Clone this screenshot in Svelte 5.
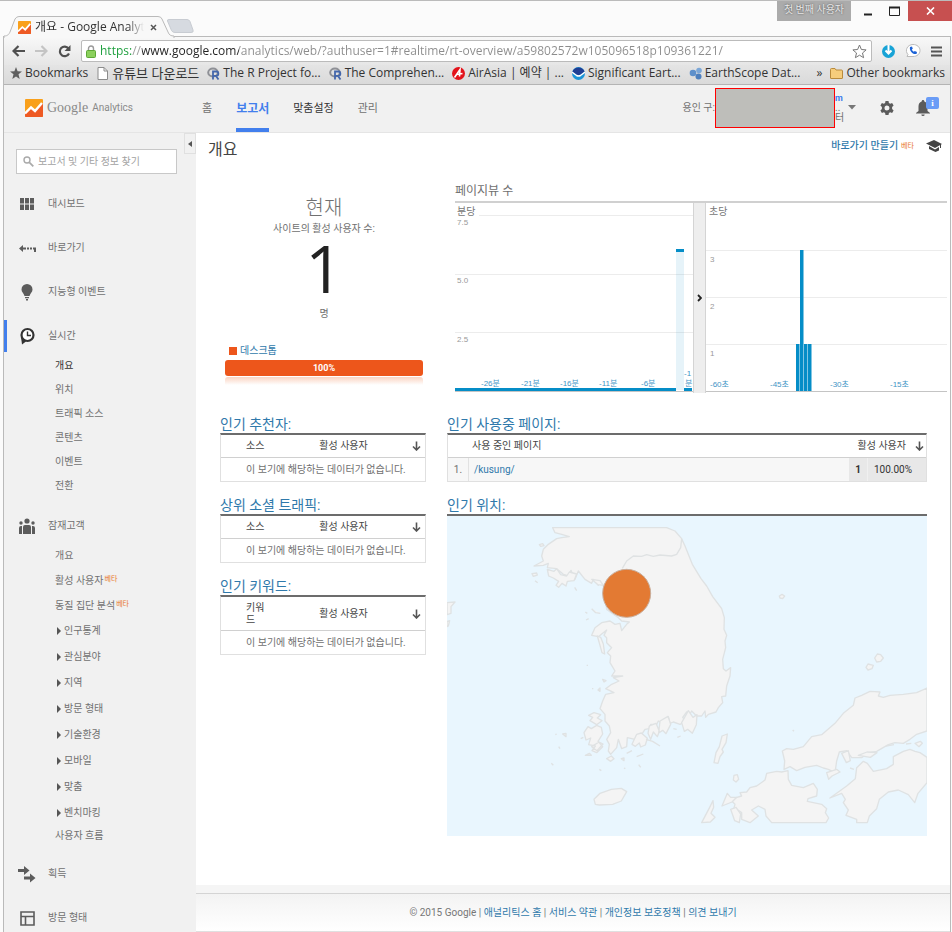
<script>
  const url = 'https://www.google.com/analytics/web/?authuser=1#realtime/rt-overview/a59802572w105096518p109361221/';

  const bookmarks = [
    { icon: 'page', label: '유튜브 다운로드', wide: true },
    { icon: 'r', label: 'The R Project fo...' },
    { icon: 'r', label: 'The Comprehen...' },
    { icon: 'air', label: 'AirAsia | 예약 | ...' },
    { icon: 'noaa', label: 'Significant Eart...' },
    { icon: 'earth', label: 'EarthScope Dat...' }
  ];

  const menu = [
    { icon: 'grid', label: '대시보드' },
    { icon: 'short', label: '바로가기' },
    { icon: 'bulb', label: '지능형 이벤트' },
    {
      icon: 'clock', label: '실시간', active: true,
      items: [
        { label: '개요', current: true }, { label: '위치' }, { label: '트래픽 소스' },
        { label: '콘텐츠' }, { label: '이벤트' }, { label: '전환' }
      ]
    },
    {
      icon: 'people', label: '잠재고객',
      items: [
        { label: '개요' }, { label: '활성 사용자', beta: true }, { label: '동질 집단 분석', beta: true },
        { label: '인구통계', fold: true }, { label: '관심분야', fold: true }, { label: '지역', fold: true },
        { label: '방문 형태', fold: true }, { label: '기술환경', fold: true }, { label: '모바일', fold: true },
        { label: '맞춤', fold: true }, { label: '벤치마킹', fold: true }, { label: '사용자 흐름', tight: true }
      ]
    },
    { icon: 'arrows', label: '획득' },
    { icon: 'layout', label: '방문 형태' }
  ];

  const reports = [
    { title: '인기 추천자:', column: '소스' },
    { title: '상위 소셜 트래픽:', column: '소스' },
    { title: '인기 키워드:', column: '키워드', tall: true }
  ];

  const minuteTicks = [[26, '-26분'], [66, '-21분'], [105, '-16분'], [144, '-11분'], [186, '-6분']];
  const secondTicks = [[4, '-60초'], [64, '-45초'], [124, '-30초'], [184, '-15초']];
  const seconds = [[90, 1], [94, 3], [98, 1], [102, 1]];
  const footerLinks = ['애널리틱스 홈', '서비스 약관', '개인정보 보호정책', '의견 보내기'];
</script>

{#snippet down()}
  <svg class="down" width="9" height="10" viewBox="0 0 9 10" aria-hidden="true"><path d="M4.5 0.5V9M1 5.5l3.5 3.5L8 5.5" fill="none" stroke="#555" stroke-width="1.6" /></svg>
{/snippet}

{#snippet gaLogo(size)}
  <svg width={size} height={size} viewBox="0 0 18 18" aria-hidden="true">
    <rect width="18" height="18" rx="1" fill="#f9a01b" />
    <path d="M0 14.5 6 8.500l4 3.500 8-8V17a1 1 0 0 1-1 1H1a1 1 0 0 1-1-1z" fill="#ee5a24" />
    <path d="M0 14.500 6 8.500l4 3.500 7-8" fill="none" stroke="#fff" stroke-width="2.400" />
  </svg>
{/snippet}

<div class="window">
  <header class="titlebar">
    <div class="tab">
      <svg class="tabshape" width="194" height="22" viewBox="0 0 194 22" aria-hidden="true">
        <path d="M0 22V20C4 20 5 18 6 16L11 3Q12.500.5 15 .5H154Q157 .5 158 3L164 16C165 19 167 20 170 20V22" fill="#f8f8f8" stroke="#bababa" />
        <path d="M163.500 5Q163 3.500 165 3.500H183Q185 3.500 186 5.500L189 14Q190 16.500 187 16.500H171Q168.500 16.500 167.500 14.500Z" fill="#d6dae0" stroke="#c8ccd2" />
      </svg>
      <span class="fav">{@render gaLogo(13)}</span>
      <span class="tabtitle">개요 - Google Analyt</span>
      <button class="tabclose" aria-label="Close tab">
        <svg width="7" height="7" viewBox="0 0 7 7"><path d="M1 1l5 5M6 1L1 6" stroke="#555" stroke-width="1.500" /></svg>
      </button>
    </div>
    <div class="controls">
      <span class="profile">첫 번째 사용자</span>
      <button aria-label="Minimize"><svg width="10" height="10" viewBox="0 0 10 10"><path d="M1 8.500h8" stroke="#222" stroke-width="2" /></svg></button>
      <button aria-label="Maximize"><svg width="11" height="10" viewBox="0 0 11 10"><path d="M.5 1v8.500h10V1" fill="none" stroke="#222" /><path d="M0 1.500h11" stroke="#222" stroke-width="2" /></svg></button>
      <button class="close" aria-label="Close"><svg width="9" height="8" viewBox="0 0 9 8"><path d="M1 .5l7 7M8 .5l-7 7" stroke="#fff" stroke-width="1.600" /></svg></button>
    </div>
  </header>

  <div class="frame">
    <div class="toolbar">
      <button aria-label="Back"><svg width="13" height="12" viewBox="0 0 13 12"><path d="M6.500 1L1.500 6l5 5M2 6h11" fill="none" stroke="#505050" stroke-width="2.200" /></svg></button>
      <button aria-label="Forward"><svg width="13" height="12" viewBox="0 0 13 12"><path d="M6.500 1l5 5-5 5M11 6H0" fill="none" stroke="#c4c4c4" stroke-width="2.200" /></svg></button>
      <button aria-label="Reload"><svg width="13" height="13" viewBox="0 0 13 13"><path d="M10.500 3.500A4.800 4.800 0 1 0 11 8.500" fill="none" stroke="#505050" stroke-width="2.200" /><path d="M12.500 0v6h-6z" fill="#505050" /></svg></button>
      <div class="omni">
        <svg width="10" height="13" viewBox="0 0 10 13" aria-hidden="true"><path d="M2.500 6V3.500a2.500 2.500 0 0 1 5 0V6" fill="none" stroke="#9a9a9a" stroke-width="1.400" /><rect x=".5" y="5.500" width="9" height="7" rx="1" fill="#8bd05c" stroke="#5da736" /></svg>
        <input aria-label="Address" value={url} />
        <button aria-label="Bookmark this page"><svg width="15" height="15" viewBox="0 0 15 15"><path d="M7.500 1l1.900 4.500 4.700.4-3.600 3.100 1.100 4.700-4.100-2.500-4.100 2.500L4.500 9 .9 5.900l4.700-.4z" fill="#fff" stroke="#777" /></svg></button>
      </div>
      <button aria-label="Downloader"><svg width="13" height="13" viewBox="0 0 13 13"><circle cx="6.500" cy="6.500" r="6.500" fill="#18a3d6" /><path d="M6.500 0v8M3.500 5.500l3 3 3-3" fill="none" stroke="#fff" stroke-width="2" /></svg></button>
      <button aria-label="Calls"><svg width="16" height="14" viewBox="0 0 16 14"><path d="M8 .5c4 0 7 2.500 7 6s-3 6-7 6H2l1-2C-.5 7 2 .5 8 .5z" fill="#fff" stroke="#bbb" /><path d="M5 3l2-.5.8 2.300-1 .8c.4 1 1.200 1.800 2 2.200l1-.9 2.200 1-.5 2C8 11 4 7 5 3z" fill="#1c62d6" /></svg></button>
      <button aria-label="Menu"><svg width="11" height="11" viewBox="0 0 11 11"><path d="M0 1.500h11M0 5.500h11M0 9.500h11" stroke="#555" stroke-width="2" /></svg></button>
    </div>

    <nav class="bookmarks" aria-label="Bookmarks">
      <a href="#bookmarks"><svg width="12" height="12" viewBox="0 0 12 12"><path d="M6 0l1.600 4.200 4.400.2-3.500 2.800L9.700 12 6 9.400 2.300 12l1.200-4.800L0 4.400l4.400-.2z" fill="#606060" /></svg><span>Bookmarks</span></a>
      {#each bookmarks as b}
        <a href="#b" class:wide={b.wide}>
          <svg width="13" height="13" viewBox="0 0 13 13">
            {#if b.icon === 'page'}
              <path d="M2 .5h6l3.500 3.500v8.500H2z" fill="#fff" stroke="#8c8c8c" /><path d="M8 .5V4h3.500" fill="none" stroke="#8c8c8c" />
            {:else if b.icon === 'r'}
              <ellipse cx="6" cy="5.500" rx="4.800" ry="4" fill="none" stroke="#8e9096" stroke-width="2" /><path d="M6 12.500V4.500h3.200a2 2 0 0 1 0 4.300H6M9 9l2.500 3.500" fill="none" stroke="#4467ac" stroke-width="1.800" />
            {:else if b.icon === 'air'}
              <circle cx="6.500" cy="6.500" r="6.500" fill="#e3131b" /><path d="M2.500 10.500L8 2.500l-.5 7M4.500 7.500l6-1" fill="none" stroke="#fff" stroke-width="1.600" />
            {:else if b.icon === 'noaa'}
              <circle cx="6.500" cy="6.500" r="6.500" fill="#1b95d8" /><path d="M.3 5A6.500 6.500 0 0 1 12.700 5L8 8H5z" fill="#1f3f94" /><path d="M0 5l4.500 3.500Q6.500 9.500 8.500 8.500L13 5" fill="none" stroke="#fff" stroke-width="1.400" />
            {:else}
              <circle cx="4" cy="6" r="3.300" fill="#5e90cb" /><circle cx="10" cy="3.500" r="2.800" fill="#7ba7d8" /><circle cx="9.500" cy="9.500" r="3" fill="#4d7fbd" />
            {/if}
          </svg><span>{b.label}</span>
        </a>
      {/each}
      <button class="more" aria-label="More bookmarks">»</button>
      <a class="other" href="#other"><svg width="13" height="11" viewBox="0 0 13 11"><path d="M.5 10V1.500q0-1 1-1H5l1 1.500h5.500q1 0 1 1V10q0 .5-.5.5H1q-.5 0-.5-.5z" fill="#f6cd7c" stroke="#b98b3c" /></svg><span>Other bookmarks</span></a>
    </nav>

    <header class="appbar">
      <a class="brand" href="#home">{@render gaLogo(18)}<span class="google">Google</span><span class="analytics">Analytics</span></a>
      <nav class="tabs" aria-label="Main">
        <a href="#home">홈</a>
        <a href="#reports" class="on">보고서</a>
        <a href="#custom" class="dark">맞춤설정</a>
        <a href="#admin">관리</a>
      </nav>
      <div class="account">
        <span>용인 구:</span>
        <div class="mask"></div>
        <div class="tail"><b>m</b><span>..</span><span>터</span></div>
        <button aria-label="Account menu"><svg width="8" height="5" viewBox="0 0 8 5"><path d="M0 0h8L4 4.500z" fill="#777" /></svg></button>
      </div>
      <button class="gear" aria-label="Settings"><svg width="14" height="14" viewBox="0 0 14 14"><path d="M5.500 0h3l.4 2 1.300.7 1.900-.7 1.500 2.600L12.100 6v2l1.500 1.400L12.100 12l-1.900-.7-1.300.7-.4 2h-3l-.4-2-1.300-.7-1.900.7L.4 9.400 1.900 8V6L.4 4.600 1.900 2l1.900.7L5.100 2zM7 4.500a2.500 2.500 0 1 0 0 5 2.500 2.500 0 0 0 0-5z" fill="#5b5b5b" fill-rule="evenodd" /></svg></button>
      <button class="bell" aria-label="Notifications">
        <svg width="14" height="16" viewBox="0 0 14 16"><path d="M7 0a1.300 1.300 0 0 1 1.300 1.400C10.500 2 11.500 4 11.500 6.500V11l2.500 2v.5H0V13l2.500-2V6.500C2.500 4 3.500 2 5.700 1.400A1.300 1.300 0 0 1 7 0zM5.300 14.500h3.400a1.700 1.500 0 0 1-3.400 0z" fill="#5b5b5b" /></svg>
        <i>i</i>
      </button>
    </header>

    <div class="body">
      <aside class="side">
        <form class="search">
          <svg width="11" height="11" viewBox="0 0 11 11" aria-hidden="true"><circle cx="4" cy="4" r="3" fill="none" stroke="#aaa" stroke-width="1.400" /><path d="M6.300 6.300l4 4" stroke="#aaa" stroke-width="1.800" /></svg>
          <input aria-label="검색" placeholder="보고서 및 기타 정보 찾기" />
        </form>
        {#each menu as m}
          <a class="item" class:active={m.active} href="#menu">
            <svg width="18" height="18" viewBox="0 0 18 18" fill="#5c5c5c" aria-hidden="true">
              {#if m.icon === 'grid'}
                <path d="M2 3h4v5.500H2zM7 3h4v5.500H7zM12 3h4v5.500h-4zM2 9.500h4V15H2zM7 9.500h4V15H7zM12 9.500h4V15h-4z" />
              {:else if m.icon === 'short'}
                <path d="M1 9.500l4-3.500v2.500h3v2H5V13zM9 8.500h2v2H9zM12 8.500h2v2h-2zM15 8.500h3V13h-2v-2.500h-1z" />
              {:else if m.icon === 'bulb'}
                <path d="M9 1a5.500 5.500 0 0 1 5.500 5.500c0 2.500-2 3.500-3 6.500h-5c-1-3-3-4-3-6.500A5.500 5.500 0 0 1 9 1zM7 14h4v1.200H7zM8 16h2v1.500H8z" />
              {:else if m.icon === 'clock'}
                <circle cx="9.500" cy="8" r="6" fill="#fff" stroke="#333" stroke-width="2.200" /><path d="M3 10l1 7.500 4-3z" fill="#333" /><path d="M9.500 4.500V8.500h3.500" fill="none" stroke="#333" stroke-width="1.400" />
              {:else if m.icon === 'people'}
                <circle cx="9" cy="4" r="2.600" /><circle cx="3" cy="6" r="1.700" /><circle cx="15" cy="6" r="1.700" /><path d="M5 17V10q0-2 2-2h4q2 0 2 2v7zM1 17v-6q0-2 2-2h1v8zM14 9h1q2 0 2 2v6h-3z" />
              {:else if m.icon === 'arrows'}
                <path d="M0 4h6V1l5.500 4.500L6 10V7H0zM6 11.500h6v-3l5.500 4.500-5.500 4.500v-3H6z" />
              {:else}
                <path d="M3 3h13v13H3zM3 7.500h13M7.500 7.500V16" fill="none" stroke="#5c5c5c" stroke-width="1.600" />
              {/if}
            </svg>
            <span>{m.label}</span>
          </a>
          {#if m.items}
            <ul>
              {#each m.items as s}
                <li class:beta={s.beta} class:fold={s.fold} class:tight={s.tight}>
                  <a href="#sub" class:current={s.current}>{#if s.fold}<svg width="4" height="8" viewBox="0 0 4 8" aria-hidden="true"><path d="M0 0l4 4-4 4z" fill="#555" /></svg>{/if}{s.label}{#if s.beta}<sup>베타</sup>{/if}</a>
                </li>
              {/each}
            </ul>
          {/if}
        {/each}
        <button class="collapse" aria-label="Collapse sidebar"><svg width="4" height="6" viewBox="0 0 4 6"><path d="M4 0v6L0 3z" fill="#555" /></svg></button>
      </aside>

      <main>
        <div class="content">
          <div class="heading">
            <h1>개요</h1>
            <a href="#shortcut">바로가기 만들기</a><sup>베타</sup>
            <svg width="16" height="12" viewBox="0 0 16 12" aria-hidden="true"><path d="M0 3.500L8 0l8 4-7 4z" fill="#444" /><path d="M3 6l6 3.500L13 7v3.500L9.500 12 3 9z" fill="#444" /><path d="M14.500 4v4" stroke="#444" /></svg>
          </div>

          <div class="top">
            <section class="now">
              <h2>현재</h2>
              <p>사이트의 활성 사용자 수:</p>
              <strong>1</strong>
              <p>명</p>
              <div class="legend"><i></i>데스크톱</div>
              <div class="bar">100%</div>
              <div class="mirror"></div>
            </section>

            <section class="views">
              <h2>페이지뷰 수</h2>
              <div class="charts">
                <svg class="minutes" viewBox="0 0 238 190" role="img" aria-label="분당 페이지뷰">
                  <path d="M24 12.500H238M0 71.500H238M0 129.500H238" stroke="#ececec" />
                  <text x="2" y="12" class="name">분당</text>
                  <svg x="0" y="17" width="40" height="10"><text x="2" y="5">7.5</text></svg>
                  <text x="2" y="80">5.0</text>
                  <text x="2" y="139">2.5</text>
                  {#each minuteTicks as t}<text class="tick" x={t[0]} y="183">{t[1]}</text>{/each}
                  <text class="tick" x="229" y="173">-1</text>
                  <text class="tick" x="230" y="183">분</text>
                  <rect x="221" y="49" width="8" height="138" fill="#058dc7" opacity=".1" />
                  <path d="M221 47.500h8M0 186.500H221M229 186.500h8" stroke="#058dc7" stroke-width="3" />
                  <path d="M0 188.500H238" stroke="#c4c4c4" />
                </svg>
                <button class="split" aria-label="펼치기"><svg width="5" height="8" viewBox="0 0 5 8"><path d="M1 1l3 3-3 3" fill="none" stroke="#222" stroke-width="1.800" /></svg></button>
                <svg class="secs" viewBox="0 0 241 190" role="img" aria-label="초당 페이지뷰">
                  <path d="M0 47.500H241M0 94.500H241M0 141.500H241" stroke="#ececec" />
                  <text x="3" y="12" class="name">초당</text>
                  <text x="4" y="59">3</text>
                  <text x="4" y="106">2</text>
                  <text x="4" y="153">1</text>
                  {#each secondTicks as t}<text class="tick" x={t[0]} y="184">{t[1]}</text>{/each}
                  {#each seconds as s}<rect x={s[0]} y={188 - s[1] * 47} width="3.500" height={s[1] * 47} fill="#058dc7" />{/each}
                  <path d="M0 188.500H241" stroke="#c4c4c4" />
                </svg>
              </div>
            </section>
          </div>

          <div class="cards">
            <div>
              {#each reports as r}
                <section class="card">
                  <h3><a href="#report">{r.title}</a></h3>
                  <table class="list" class:tall={r.tall}>
                    <thead><tr><th class="src"><span>{r.column}</span></th><th>활성 사용자</th><th class="sort">{@render down()}</th></tr></thead>
                    <tbody><tr><td colspan="3" class="empty">이 보기에 해당하는 데이터가 없습니다.</td></tr></tbody>
                  </table>
                </section>
              {/each}
            </div>
            <div>
              <section class="card">
                <h3><a href="#pages">인기 사용중 페이지:</a></h3>
                <table class="pages">
                  <thead><tr><th class="num"></th><th class="left">사용 중인 페이지</th><th colspan="2" class="right"><div><span>활성 사용자</span>{@render down()}</div></th></tr></thead>
                  <tbody><tr><td class="num">1.</td><td class="path"><a href="#kusung">/kusung/</a></td><td class="count">1</td><td class="pct">100.00%</td></tr></tbody>
                </table>
              </section>
              <section class="card">
                <h3><a href="#geo">인기 위치:</a></h3>
                <svg class="map" viewBox="21 30 1440 960" role="img" aria-label="인기 위치 지도">
                  <rect x="21" y="30" width="1440" height="960" fill="#e9f6fe" />
                  <g fill="#f4f4f4" stroke="#dfe2e3" stroke-width="4" stroke-linejoin="round">
                    <path d="M338 65L680 65 705 75 725 98 735 120 757 175 783 218 800 240 818 272 845 308 853 335 852 370 860 388 855 405 857 425 848 460 850 488 858 495 872 485 870 510 860 540 857 570 845 572 848 590 835 605 828 618 805 625 797 634 795 615 785 630 770 630 755 615 748 627 740 618 728 634 738 645 720 655 700 648 690 652 685 632 675 645 665 650 655 645 650 655 632 655 628 668 615 670 605 685 590 690 585 700 562 695 560 722 545 728 535 700 530 725 512 745 505 735 508 715 500 700 512 680 508 660 495 645 495 625 480 608 488 585 497 565 522 560 497 548 515 535 537 525 520 515 548 510 515 510 525 495 510 470 512 450 502 440 515 425 500 410 500 395 492 388 500 372 475 392 455 388 465 365 485 350 510 345 525 355 540 352 545 374 560 355 568 348 545 345 535 335 500 310 490 240 480 225 475 238 460 220 455 232 435 220 415 195 405 220 393 193 385 210 370 205 350 188 322 185 325 172 310 178 282 180 310 165 305 150 310 130 325 115 350 98 365 95 388 92 365 85 345 80Z" />
                    <path d="M725 98L722 125 710 145 695 150 660 147 640 151 620 146 605 151 580 150 560 165 547 187" fill="none" />
                    <path d="M322 190l20 6 8-8 12 18 18 4 8-12 22 6-8 20-20 2-4 14-12-8-10 12-8-6 8-12-16-10-14-6zM455 220l25 4 10 14-16-2zM298 116l10-3 4 6-10 2zM276 203l14-2 2 6-12 4zM285 224l8 6M404 244l6 10" />
                    <path d="M472 390l10 4 8 20 4 30-8-4-6-22zM455 308l12 12 14 2M438 342l8-4M436 318l6 4M488 520l10 4-6 4zM474 552l6-6v10zM456 548l4 0M440 478l4 0" />
                    <path d="M446 628l16-8 20 6-10 10 14 8-16 12-20-12 8-10zM432 680l12-18 10 6 16-10 14 6 4 20-14 22 14 16-18 18-14-6 10-14-20-4 6-20-14 6zM455 722l22-14 12 6-18 20zM422 698l8-4M436 748l12-6 6 6zM500 758l14-8 8 8-10 8zM544 758l8-2v8zM478 790l6 4M596 776l6 8M552 786l4 2M334 772l6 6M368 684l10-2v10zM356 722l4 6M346 686l4-2" />
                    <path d="M576 715l14-30 14-4 18 16-6 20-14 6-4-12-12 10zM628 660l20-8 10 24-6 16-12-14-8 22-8-18zM660 645l24-14 8 24-14 28-10-10-12 8zM725 650l20-36 14 20 12-8-2 30-12 26-14-12-10 6zM618 700l20 6 22 14M700 668l10 2M712 694l10-4M560 742l16-8M590 752l20-8" />
                    <path d="M846 690l16-6-4 26-12 20 4 8-10 14-6 20-12-2 6-30 10-18zM882 808l10-2 4 14-8 8-8-6zM462 880l18-18 34-12 30-3 16 10-16 28-26 10-40 2-12-2zM785 950l24-46 10-20 2 20-8 18 12 12-14 14z" />
                    <path d="M21 290l24-2-12 14 0 20-12 4zM21 346l8-2-4 16-4 2z" />
                    <path d="M1018 270l8-5 8 5-6 8-8-2zM1304 456l8-12 10 2 8 10-8 10-12 2zM1278 484l6-10 16 4-4 10-12 4zM1058 672l4 4" />
                    <path d="M1461 546L1430 560 1390 565 1350 568 1330 574 1315 570 1320 558 1305 557 1290 556 1265 568 1245 576 1240 598 1210 622 1185 652 1145 686 1115 692 1090 722 1060 730 1040 728 1027 735 1034 765 1032 790 1050 782 1070 794 1095 784 1130 778 1150 786 1165 790 1185 800 1190 765 1198 738 1220 734 1235 755 1265 755 1285 740 1310 736 1345 716 1365 710 1390 712 1410 700 1430 685 1461 675Z" />
                    <path d="M1461 754L1440 740 1425 736 1410 730 1390 736 1360 752 1360 775 1340 788 1300 796 1282 772 1270 766 1250 785 1246 818 1220 840 1170 876 1205 862 1216 880 1210 890 1225 912 1218 928 1250 940 1250 950 1282 950 1288 930 1310 908 1318 880 1345 858 1375 852 1405 866 1424 890 1434 862 1461 830Z" />
                    <path d="M1044 794L1025 798 1010 796 980 802 975 822 950 840 930 845 920 858 900 860 905 870 870 880 885 895 882 905 905 920 905 940 930 950 955 930 935 912 955 900 975 910 978 930 995 950 1158 950 1166 936 1156 920 1160 908 1145 895 1102 886 1104 878 1130 870 1132 850 1120 832 1090 845 1055 838 1045 820Z" />
                    <path d="M1425 712l16-6 6 6-10 10zM1205 742l20-8 6 30-12 6zM1255 748l26-10 30 2-20 14zM1160 800l30-10 10 8-24 12-10 10zM1230 786l12 4M846 900l16-38 10 12 18 0-14 14zM872 910l16-6 14 20-4 26-14-6zM1338 720l24-4M1398 714l16-2" />
                  </g>
                  <circle cx="560" cy="262" r="72" fill="#e37a33" stroke="#c9ae9c" stroke-width="3" />
                </svg>
              </section>
            </div>
          </div>
        </div>
        <footer>
          <span>© 2015 Google{#each footerLinks as l}{' | '}<a href="#footer">{l}</a>{/each}</span>
        </footer>
      </main>
    </div>
  </div>
</div>

<style>
  :global(body) { margin: 0; background: #fbfbfb; }
  .window { height: 100vh; overflow: hidden; display: flex; flex-direction: column; box-sizing: border-box; border-top: 1px solid #bbb; background: #fbfbfb; color: #707070; font: 10px/14px Roboto, "Noto Sans CJK KR", sans-serif; }
  .window :global(*) { box-sizing: border-box; }
  a { color: inherit; text-decoration: none; }
  button { border: 0; padding: 0; background: none; display: flex; align-items: center; justify-content: center; font: inherit; color: inherit; }
  svg { display: block; flex: none; }
  h1, h2, h3, p, ul { margin: 0; padding: 0; font-weight: 400; list-style: none; }
  input { border: 0; outline: 0; padding: 0; background: none; min-width: 0; flex: 1; font: inherit; }

  .titlebar { height: 35px; display: flex; justify-content: space-between; flex: none; }
  .tab { position: relative; width: 194px; height: 20px; margin: 15px 0 0 4px; padding: 2px 0 0 14px; display: flex; align-items: center; color: #333; font: 12px/18px "Open Sans", "Noto Sans CJK KR", sans-serif; }
  .tabshape { position: absolute; left: 0; top: 0; z-index: 1; }
  .fav, .tabtitle, .tabclose { position: relative; z-index: 2; }
  .tabtitle { width: 109px; margin: 0 6px 0 4px; white-space: nowrap; mask-image: linear-gradient(90deg, #000 85%, transparent); }
  .controls { display: flex; height: 20px; }
  .controls button { width: 26px; }
  .controls .close { width: 44px; background: #c75050; margin-left: 1px; }
  .profile { width: 74px; margin-right: 4px; background: #ababab; color: #e8e8e8; text-align: center; line-height: 18px; text-shadow: 0 0 2px #444; }

  .frame { flex: 1; min-height: 0; display: flex; flex-direction: column; margin: 0 1px 0 3px; border: 1px solid #bababa; border-bottom: 0; }
  .toolbar { height: 28px; flex: none; display: flex; align-items: center; gap: 10px; padding: 0 8px; background: linear-gradient(#f8f8f8, #e6e6e6); }
  .omni { flex: 1; height: 22px; display: flex; align-items: center; gap: 4px; padding: 0 4px; background: #fff; border: 1px solid #bbb; border-radius: 2px; font: 12px/18px "Open Sans", sans-serif; }
  .omni input { color: transparent; background: linear-gradient(90deg, #179c38 32px, #999 32px, #999 42px, #222 42px, #222 139px, #8c8c8c 139px); background-clip: text; -webkit-background-clip: text; }
  .bookmarks { height: 20px; flex: none; display: flex; align-items: center; gap: 8px; padding: 0 5px 3px 6px; background: linear-gradient(#e4e4e4, #dadada); border-bottom: 1px solid #b4b4b4; color: #333; font: 12px/16px "Open Sans", "Noto Sans CJK KR", sans-serif; white-space: nowrap; }
  .bookmarks a { display: flex; align-items: center; gap: 3px; }
  .bookmarks .wide { font-size: 13px; }
  .more { margin-left: auto; }

  .appbar { height: 48px; flex: none; display: flex; align-items: center; padding: 0 11px 2px 21px; background: #f1f1f1; border-bottom: 1px solid #e5e5e5; }
  .brand { display: flex; align-items: center; width: 177px; color: #8a8a8a; }
  .google { font: 14px/18px "Liberation Serif", serif; margin: 0 4px; }
  .tabs { display: flex; align-self: stretch; gap: 24px; font-size: 11px; margin-bottom: -2px; }
  .tabs a { display: flex; align-items: center; border-bottom: 4px solid transparent; padding-top: 4px; }
  .tabs .on { color: #427fed; font-size: 12px; font-weight: 700; border-color: #427fed; }
  .tabs .dark { color: #333; }
  .account { margin-left: auto; display: flex; align-items: center; }
  .mask { width: 120px; height: 40px; background: #bebeba; border: 1px solid #f00; }
  .tail { display: flex; flex-direction: column; line-height: 10px; width: 13px; }
  .tail b { color: #427fed; font-size: 9px; }
  .gear { margin: 0 22px 0 24px; }
  .bell { position: relative; margin-right: 9px; }
  .bell i { position: absolute; left: 10px; top: -3px; width: 13px; height: 12px; border-radius: 2px; background: #6a9cf6; color: #fff; font: 700 9px/12px "Liberation Serif", serif; }

  .body { flex: 1; min-height: 0; display: flex; }
  .side { position: relative; width: 192px; flex: none; background: #f1f1f1; padding-top: 16px; }
  .search { display: flex; align-items: center; gap: 4px; width: 161px; height: 25px; margin: 0 0 12px 12px; padding: 0 6px; background: #fff; border: 1px solid #c8c8c8; }
  .search input::placeholder { color: #a2a2a2; }
  .item { display: flex; align-items: center; gap: 12px; height: 36px; margin-bottom: 8px; padding-left: 14px; }
  .item.active { padding-left: 11px; border-left: 3px solid #427fed; border-image: linear-gradient(transparent 2px, #427fed 2px, #427fed 34px, transparent 34px) 0 0 0 1 / 0 0 0 3px; }
  .item:has(+ ul) { margin-bottom: 0; }
  .side ul { margin-bottom: 10px; padding-left: 51px; }
  .side li { height: 24px; display: flex; align-items: center; }
  .side li a { display: flex; align-items: center; }
  .side li.beta { height: 25px; }
  .side li.fold { height: 26px; padding-left: 2px; }
  .side li.tight { height: 20px; }
  .side li svg { margin-right: 3px; }
  .side .current { color: #333; }
  sup { color: #e8772e; font-size: 7px; line-height: 10px; padding: 0 0 3px 1px; vertical-align: baseline; }
  .collapse { position: absolute; right: 0; top: 0; width: 12px; height: 21px; border: 1px solid #e0e0e0; }

  main { flex: 1; min-width: 0; display: flex; flex-direction: column; background: #f5f5f5; }
  .content { flex: 1; background: #fff; }
  .heading { display: flex; align-items: center; height: 34px; padding: 0 8px 0 12px; }
  .heading h1 { flex: 1; font-size: 16px; color: #444; }
  .heading a { color: #2f79ab; font-weight: 500; }
  .heading a, .heading sup, .heading svg { margin-bottom: 8px; }
  .heading sup { padding: 0 12px 0 3px; }
  .top { display: grid; grid-template-columns: 198px 1fr; gap: 32px; padding: 12px 3px 0 29px; height: 248px; }
  .now { display: flex; flex-direction: column; align-items: center; padding-top: 15px; }
  .now h2 { font-size: 20px; line-height: 28px; font-weight: 300; }
  .now strong { color: #222; font: 66px/60px "Open Sans", sans-serif; margin: 1px 0 10px; }
  .legend { align-self: flex-start; display: flex; align-items: center; gap: 3px; padding-left: 4px; margin: 24px 0 3px; line-height: 12px; color: #2f79ab; }
  .legend i { width: 8px; height: 8px; background: #ed561b; }
  .bar { align-self: stretch; height: 16px; border-radius: 3px; background: #ed561b; color: #fff; text-align: center; font: 700 9px/16px Roboto, sans-serif; }
  .mirror { align-self: stretch; height: 8px; background: linear-gradient(#fbd3c2, #fff); border-radius: 3px 3px 0 0; margin-top: 1px; }
  .views { padding-top: 4px; }
  .views h2 { font-size: 12px; line-height: 16px; margin-bottom: 2px; }
  .charts { display: flex; border-top: 2px solid #d0d0d0; }
  .minutes { flex: 238; min-width: 0; }
  .secs { flex: 241; min-width: 0; }
  .split { width: 13px; background: #eee; border: 1px solid #d4d4d4; border-width: 0 1px; }
  text { fill: #999; font: 8px "Liberation Sans", "Noto Sans CJK KR", sans-serif; }
  text.name { fill: #777; font-size: 10px; }
  text.tick { fill: #3f95c6; }

  .cards { display: grid; grid-template-columns: 206fr 480fr; gap: 21px; padding: 0 23px 0 24px; }
  .card { margin-bottom: 14px; }
  h3 { font-size: 14px; line-height: 18px; color: #2f79ab; }
  table { width: 100%; border-collapse: separate; border-spacing: 0; border: 1px solid #e0e0e0; border-top: 2px solid #6c6c6c; }
  th, td { height: 23px; padding: 0; font-weight: 400; line-height: 12px; }
  th { color: #444; border-bottom: 1px solid #d0d0d0; }
  .list { table-layout: fixed; }
  .tall th { height: 34px; }
  .src { width: 54px; padding-left: 25px; text-align: left; }
  .src span { display: block; width: 20px; word-break: break-all; }
  .sort { width: 13px; }
  .empty { padding-left: 25px; }
  .pages .num { width: 20px; text-align: center; }
  .pages .left { text-align: left; padding-left: 4px; }
  .right div { display: flex; align-items: center; justify-content: flex-end; gap: 9px; padding-right: 2px; white-space: nowrap; }
  .pages td { background: #f7f7f7; }
  .path { padding-left: 5px; color: #2f79ab; border-left: 1px solid #e2e2e2; }
  .pages td.count, .pages td.pct { background: #e8e8e8; color: #333; }
  .pages td.count { width: 18px; text-align: center; font-weight: 700; }
  .pages td.pct { width: 59px; padding-left: 6px; border-left: 1px solid #f0f0f0; }
  .map { width: 100%; height: auto; border-top: 2px solid #6c6c6c; }

  footer { margin-top: 8px; height: 39px; flex: none; display: flex; align-items: center; justify-content: center; border-top: 1px solid #d4d4d4; border-bottom: 1px solid #e0e0e0; background: linear-gradient(#f3f3f3, #fff); color: #777; }
  footer a { color: #2f79ab; }
</style>
